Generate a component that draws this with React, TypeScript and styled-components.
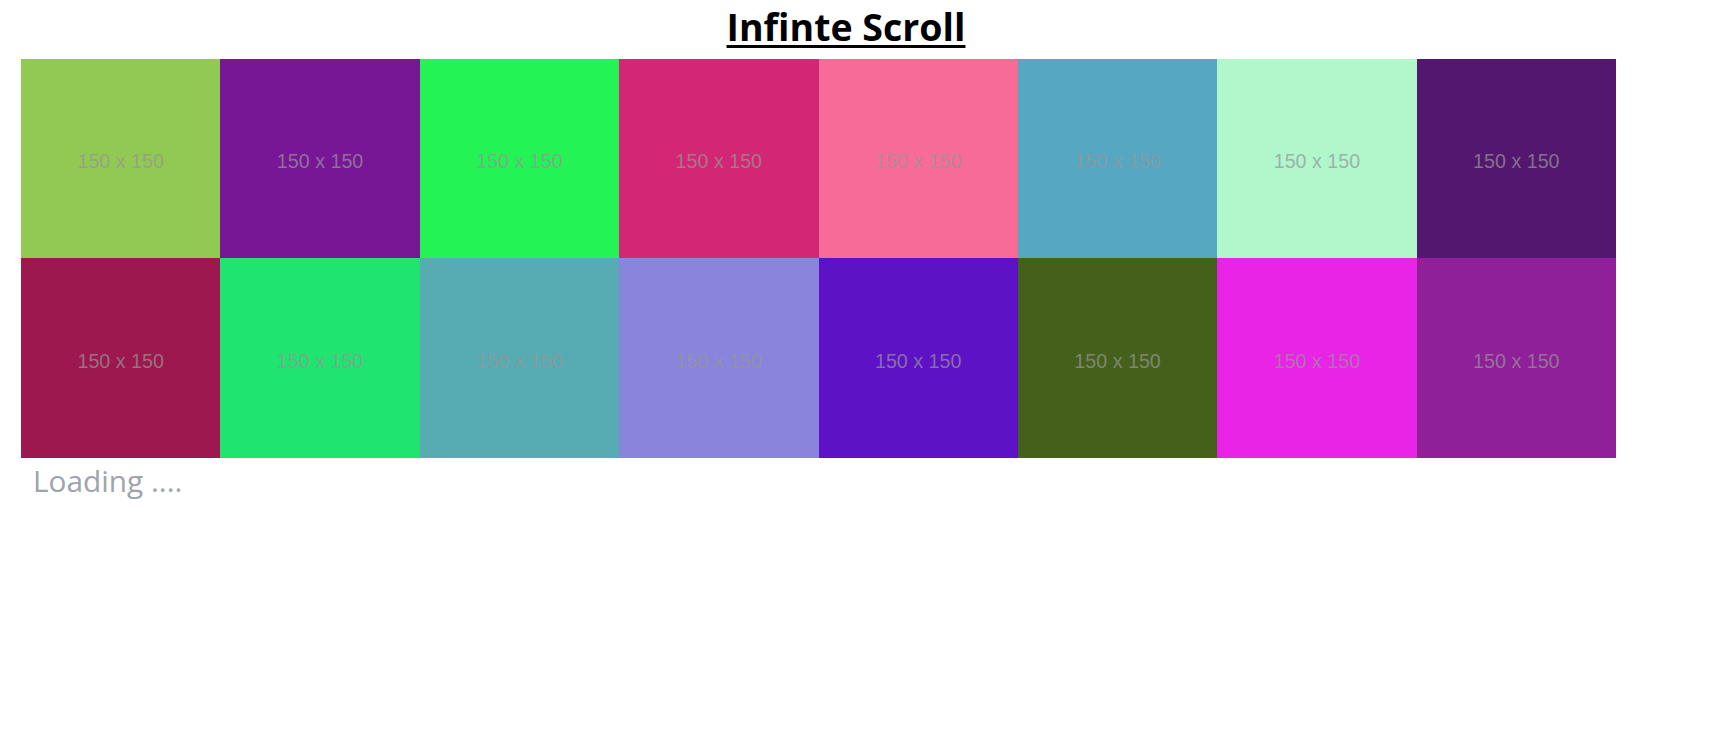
import React from "react";
import styled, { createGlobalStyle } from "styled-components";

const GlobalStyle = createGlobalStyle`
  html, body {
    margin: 0;
    padding: 0;
    background: #ffffff;
  }
  body {
    font-family: "Open Sans", "Noto Sans", sans-serif;
  }
`;

const Page = styled.div`
  display: flex;
  flex-direction: column;
  padding: 0 0 0 21px;
`;

const Title = styled.h1`
  margin: 0;
  height: 59px;
  padding-right: 51px;
  box-sizing: border-box;
  text-align: center;
  font-family: "Open Sans", "Noto Sans", sans-serif;
  font-weight: 700;
  font-size: 37.5px;
  line-height: 54px;
  color: #000;
  text-decoration: underline;
  text-decoration-thickness: 3px;
  text-underline-offset: 4px;
`;

const Grid = styled.div`
  display: grid;
  grid-template-columns: repeat(8, 199.375px);
  grid-auto-rows: 199.375px;
  width: 1595px;
`;

const Tile = styled.div<{ $bg: string }>`
  background: ${(p) => p.$bg};
  display: flex;
  align-items: center;
  justify-content: center;
  padding-top: 6px;
  box-sizing: border-box;
  font-family: "Liberation Sans", Arial, sans-serif;
  font-size: 19.7px;
  color: rgba(150, 150, 150, 0.72);
`;

const Loading = styled.div`
  padding: 3px 0 0 12px;
  font-family: "Open Sans", "Noto Sans", sans-serif;
  font-size: 29.8px;
  line-height: 40px;
  color: #9ea3ad;
`;

const colors = [
  "#92c952", "#771796", "#24f355", "#d32776",
  "#f66b97", "#56a8c2", "#b0f7cc", "#54176f",
  "#9c184f", "#1fe46f", "#56acb2", "#8985dc",
  "#5e12c6", "#45601a", "#e924e6", "#8f209a",
];

export default function App() {
  return (
    <>
      <GlobalStyle />
      <Page>
        <Title>Infinte Scroll</Title>
        <Grid>
          {colors.map((c, i) => (
            <Tile key={i} $bg={c}>150 x 150</Tile>
          ))}
        </Grid>
        <Loading>Loading ....</Loading>
      </Page>
    </>
  );
}
